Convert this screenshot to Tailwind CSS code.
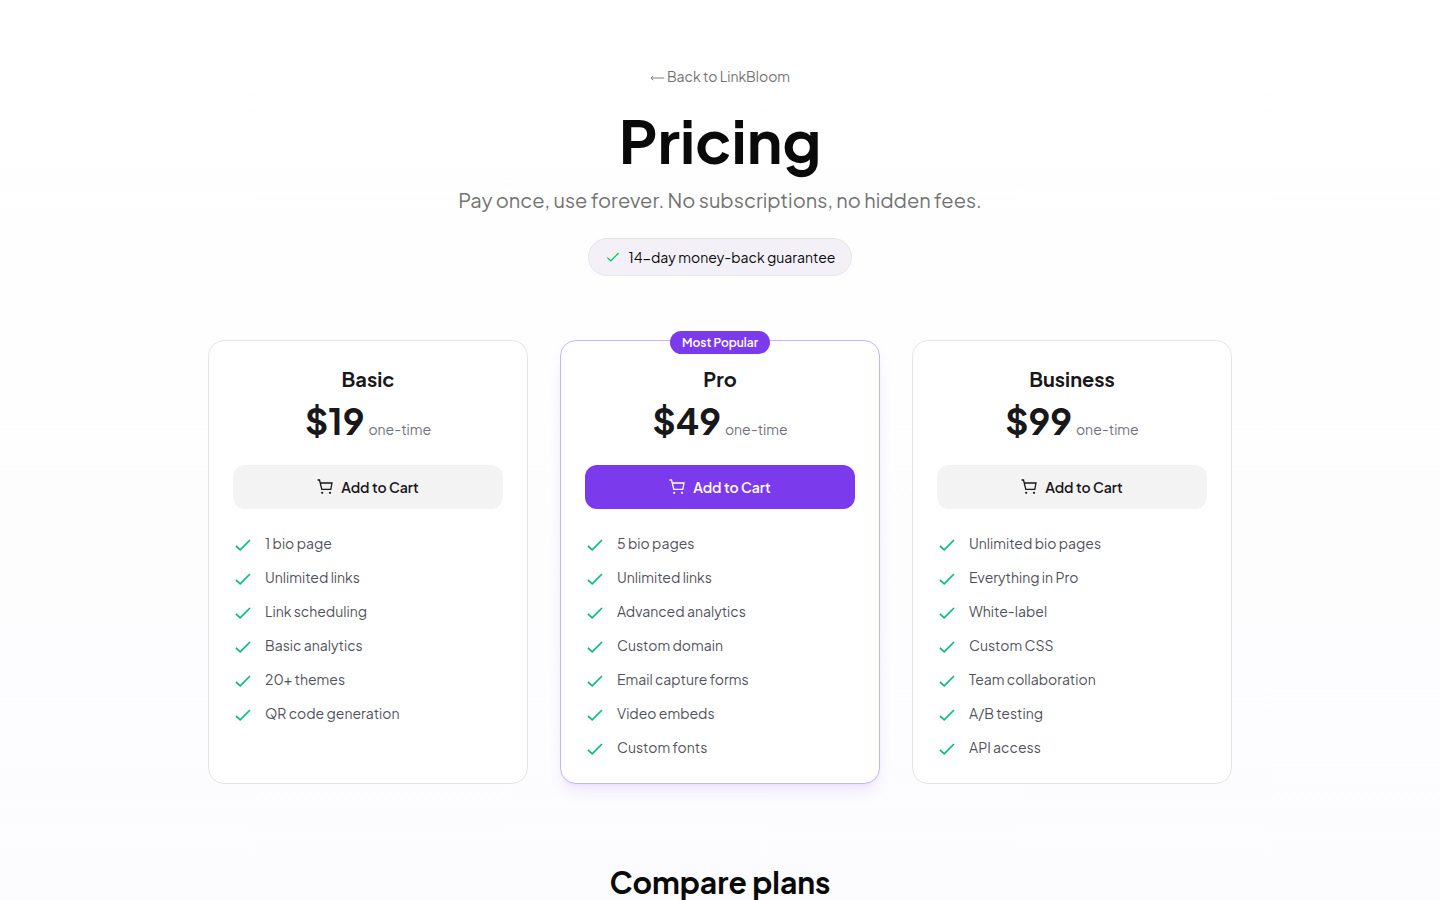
<!DOCTYPE html>
<html lang="en">
<head>
<meta charset="utf-8">
<meta name="viewport" content="width=device-width, initial-scale=1">
<title>Pricing - LinkBloom</title>
<script src="https://cdn.jsdelivr.net/npm/@tailwindcss/browser@4"></script>
</head>
<body class="min-h-screen bg-linear-to-b from-white to-[#fcfcfe] font-['Plus_Jakarta_Sans',Inter,sans-serif] text-neutral-950 antialiased">
<svg class="hidden" aria-hidden="true">
  <symbol id="check" viewBox="0 0 20 20"><path d="M2.9 10.8 7.2 14.8 17 5" fill="none" stroke="currentColor" stroke-width="1.6"/></symbol>
  <symbol id="cart" viewBox="0 0 16 16"><path d="M.5 1H2.5L4.8 10.4H13.8L15 4H3.2" fill="none" stroke="currentColor" stroke-width="1.3"/><circle cx="5.2" cy="13.8" r="1.1" fill="currentColor"/><circle cx="13" cy="13.8" r="1.1" fill="currentColor"/></symbol>
</svg>
<main class="mx-auto max-w-[1072px] px-6 pt-16">
  <header class="flex flex-col items-center text-center">
    <a href="#" class="flex items-center gap-[3px] text-sm/6 text-neutral-500"><svg class="mt-[3px] h-2 w-3.5" viewBox="0 0 14 8" fill="none" stroke="currentColor" aria-label="Back arrow"><path d="M1 4H14M3.2 1.8 1 4 3.2 6.2" stroke-width=".9"/></svg>Back to LinkBloom</a>
    <h1 class="mt-5 text-[60px]/[64px] font-bold">Pricing</h1>
    <p class="mt-3.5 text-xl/7 text-neutral-500">Pay once, use forever. No subscriptions, no hidden fees.</p>
    <div class="mt-6 flex items-center gap-2 rounded-full border border-neutral-200 bg-[#f3f0f8] px-4 py-2 text-sm/5">
      <svg class="size-4 text-green-500"><use href="#check"/></svg>
      <span>14-day money-back guarantee</span>
    </div>
  </header>

  <section class="mt-16 grid grid-cols-3 gap-8" aria-label="Plans">
    <article class="rounded-2xl border border-neutral-200 bg-white px-6 pt-6 pb-6 text-zinc-900">
      <h2 class="text-center text-xl/7 font-bold">Basic</h2>
      <p class="mt-2 flex items-baseline justify-center gap-1 text-4xl/10 font-bold">$19<span class="text-sm/5 font-normal text-zinc-500">one-time</span></p>
      <button type="button" class="mt-6 flex h-11 w-full items-center justify-center gap-2 rounded-xl bg-[#f3f3f3] text-sm/5 font-semibold"><svg class="size-4"><use href="#cart"/></svg>Add to Cart</button>
      <ul class="mt-6 flex flex-col gap-3 text-sm/5 text-zinc-600">
        <li class="flex items-start gap-3"><svg class="mt-0.5 size-5 text-emerald-500"><use href="#check"/></svg>1 bio page</li>
        <li class="flex items-start gap-3"><svg class="mt-0.5 size-5 text-emerald-500"><use href="#check"/></svg>Unlimited links</li>
        <li class="flex items-start gap-3"><svg class="mt-0.5 size-5 text-emerald-500"><use href="#check"/></svg>Link scheduling</li>
        <li class="flex items-start gap-3"><svg class="mt-0.5 size-5 text-emerald-500"><use href="#check"/></svg>Basic analytics</li>
        <li class="flex items-start gap-3"><svg class="mt-0.5 size-5 text-emerald-500"><use href="#check"/></svg>20+ themes</li>
        <li class="flex items-start gap-3"><svg class="mt-0.5 size-5 text-emerald-500"><use href="#check"/></svg>QR code generation</li>
      </ul>
    </article>

    <article class="relative rounded-2xl border border-violet-300 bg-white px-6 pt-6 pb-6 text-zinc-900 shadow-lg shadow-[#7c3aed]/10">
      <span class="absolute -top-2.5 left-1/2 -translate-x-1/2 rounded-full bg-[#7c3aed] px-3 py-1 text-xs/[15px] font-semibold whitespace-nowrap text-white">Most Popular</span>
      <h2 class="text-center text-xl/7 font-bold">Pro</h2>
      <p class="mt-2 flex items-baseline justify-center gap-1 text-4xl/10 font-bold">$49<span class="text-sm/5 font-normal text-zinc-500">one-time</span></p>
      <button type="button" class="mt-6 flex h-11 w-full items-center justify-center gap-2 rounded-xl bg-[#7c3aed] text-sm/5 font-semibold text-white"><svg class="size-4"><use href="#cart"/></svg>Add to Cart</button>
      <ul class="mt-6 flex flex-col gap-3 text-sm/5 text-zinc-600">
        <li class="flex items-start gap-3"><svg class="mt-0.5 size-5 text-emerald-500"><use href="#check"/></svg>5 bio pages</li>
        <li class="flex items-start gap-3"><svg class="mt-0.5 size-5 text-emerald-500"><use href="#check"/></svg>Unlimited links</li>
        <li class="flex items-start gap-3"><svg class="mt-0.5 size-5 text-emerald-500"><use href="#check"/></svg>Advanced analytics</li>
        <li class="flex items-start gap-3"><svg class="mt-0.5 size-5 text-emerald-500"><use href="#check"/></svg>Custom domain</li>
        <li class="flex items-start gap-3"><svg class="mt-0.5 size-5 text-emerald-500"><use href="#check"/></svg>Email capture forms</li>
        <li class="flex items-start gap-3"><svg class="mt-0.5 size-5 text-emerald-500"><use href="#check"/></svg>Video embeds</li>
        <li class="flex items-start gap-3"><svg class="mt-0.5 size-5 text-emerald-500"><use href="#check"/></svg>Custom fonts</li>
      </ul>
    </article>

    <article class="rounded-2xl border border-neutral-200 bg-white px-6 pt-6 pb-6 text-zinc-900">
      <h2 class="text-center text-xl/7 font-bold">Business</h2>
      <p class="mt-2 flex items-baseline justify-center gap-1 text-4xl/10 font-bold">$99<span class="text-sm/5 font-normal text-zinc-500">one-time</span></p>
      <button type="button" class="mt-6 flex h-11 w-full items-center justify-center gap-2 rounded-xl bg-[#f3f3f3] text-sm/5 font-semibold"><svg class="size-4"><use href="#cart"/></svg>Add to Cart</button>
      <ul class="mt-6 flex flex-col gap-3 text-sm/5 text-zinc-600">
        <li class="flex items-start gap-3"><svg class="mt-0.5 size-5 text-emerald-500"><use href="#check"/></svg>Unlimited bio pages</li>
        <li class="flex items-start gap-3"><svg class="mt-0.5 size-5 text-emerald-500"><use href="#check"/></svg>Everything in Pro</li>
        <li class="flex items-start gap-3"><svg class="mt-0.5 size-5 text-emerald-500"><use href="#check"/></svg>White-label</li>
        <li class="flex items-start gap-3"><svg class="mt-0.5 size-5 text-emerald-500"><use href="#check"/></svg>Custom CSS</li>
        <li class="flex items-start gap-3"><svg class="mt-0.5 size-5 text-emerald-500"><use href="#check"/></svg>Team collaboration</li>
        <li class="flex items-start gap-3"><svg class="mt-0.5 size-5 text-emerald-500"><use href="#check"/></svg>A/B testing</li>
        <li class="flex items-start gap-3"><svg class="mt-0.5 size-5 text-emerald-500"><use href="#check"/></svg>API access</li>
      </ul>
    </article>
  </section>

  <h2 class="mt-20 text-center text-3xl/9 font-bold">Compare plans</h2>
</main>
</body>
</html>
